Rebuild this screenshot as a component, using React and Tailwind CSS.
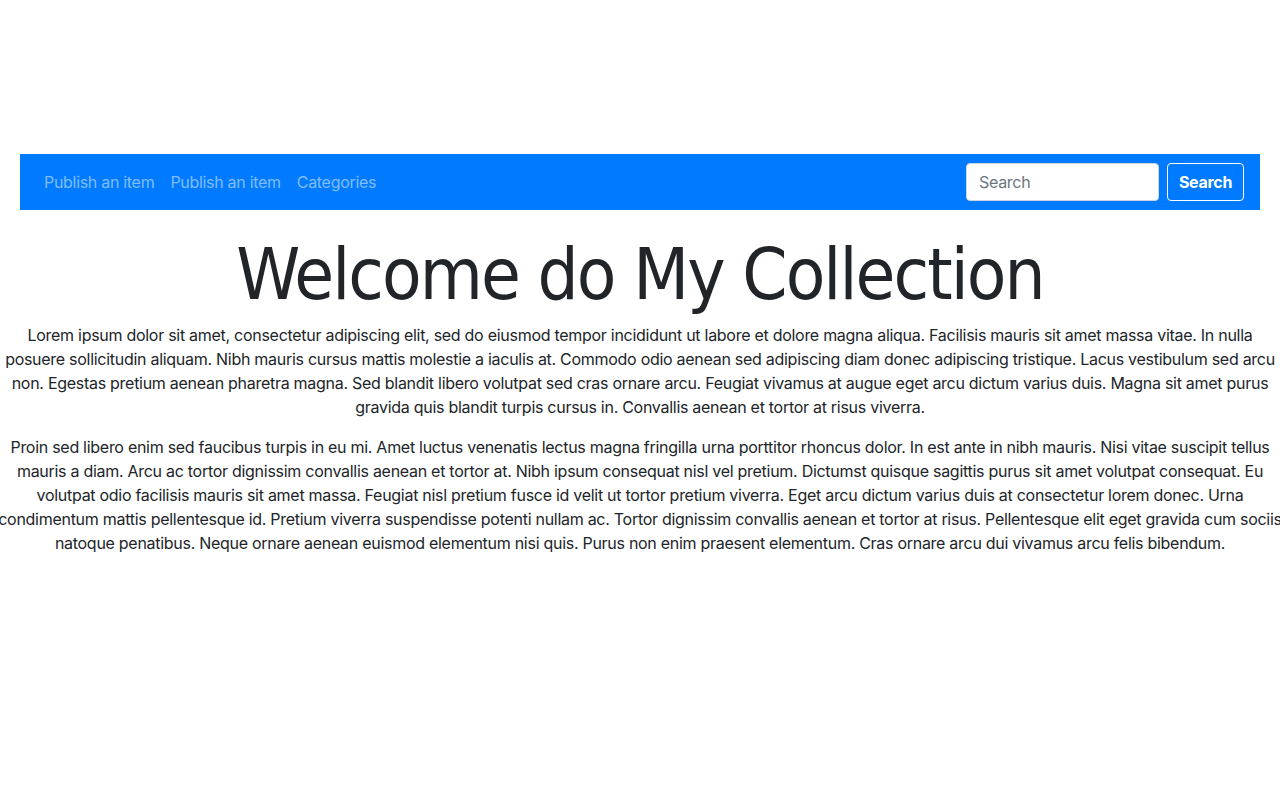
import React from "react";

const intro = [
  "Lorem ipsum dolor sit amet, consectetur adipiscing elit, sed do eiusmod tempor incididunt ut labore et dolore magna aliqua. Facilisis mauris sit amet massa vitae. In nulla",
  "posuere sollicitudin aliquam. Nibh mauris cursus mattis molestie a iaculis at. Commodo odio aenean sed adipiscing diam donec adipiscing tristique. Lacus vestibulum sed arcu",
  "non. Egestas pretium aenean pharetra magna. Sed blandit libero volutpat sed cras ornare arcu. Feugiat vivamus at augue eget arcu dictum varius duis. Magna sit amet purus",
  "gravida quis blandit turpis cursus in. Convallis aenean et tortor at risus viverra.",
];

const more = [
  "Proin sed libero enim sed faucibus turpis in eu mi. Amet luctus venenatis lectus magna fringilla urna porttitor rhoncus dolor. In est ante in nibh mauris. Nisi vitae suscipit tellus",
  "mauris a diam. Arcu ac tortor dignissim convallis aenean et tortor at. Nibh ipsum consequat nisl vel pretium. Dictumst quisque sagittis purus sit amet volutpat consequat. Eu",
  "volutpat odio facilisis mauris sit amet massa. Feugiat nisl pretium fusce id velit ut tortor pretium viverra. Eget arcu dictum varius duis at consectetur lorem donec. Urna",
  "condimentum mattis pellentesque id. Pretium viverra suspendisse potenti nullam ac. Tortor dignissim convallis aenean et tortor at risus. Pellentesque elit eget gravida cum sociis",
  "natoque penatibus. Neque ornare aenean euismod elementum nisi quis. Purus non enim praesent elementum. Cras ornare arcu dui vivamus arcu felis bibendum.",
];

// each line kept as in the screenshot, centred
const Lines = ({ lines }) => (
  <p className="mb-4 text-center text-[16px] leading-6 tracking-[-0.28px] text-[#212529]">
    {lines.map((line, i) => (
      <span key={i} className="block whitespace-nowrap">
        {line}
      </span>
    ))}
  </p>
);

export default function App() {
  return (
    <div className="min-h-[800px] bg-white font-['Inter',sans-serif] overflow-hidden">
      <div className="h-[154px]" />

      {/* Navbar */}
      <nav className="mx-5 flex h-14 items-center justify-between bg-[#007bff] px-4">
        <div className="flex items-center text-[16px] tracking-[-0.3px] text-[#80bdff]">
          <a className="px-2">Publish an item</a>
          <a className="px-2">Publish an item</a>
          <a className="px-2">Categories</a>
        </div>
        <div className="flex items-center gap-2">
          <input
            type="search"
            placeholder="Search"
            className="h-[38px] w-[193px] rounded border border-[#ced4da] bg-white px-3 text-[16px] tracking-[-0.3px] text-[#495057] placeholder:text-[#6c757d] outline-none"
          />
          <button className="h-[38px] w-[77px] rounded border border-white text-[16px] font-bold tracking-[-0.3px] text-white">
            Search
          </button>
        </div>
      </nav>

      {/* Heading + text */}
      <h1 className="mt-[21px] text-center font-['DejaVu_Sans_Condensed','DejaVu_Sans',sans-serif] text-[72px] leading-[86px] tracking-[-1.9px] text-[#212529]">
        Welcome do My Collection
      </h1>
      <div className="-mx-[15px] mt-[6px] flex flex-col items-center">
        <Lines lines={intro} />
        <Lines lines={more} />
      </div>
    </div>
  );
}
